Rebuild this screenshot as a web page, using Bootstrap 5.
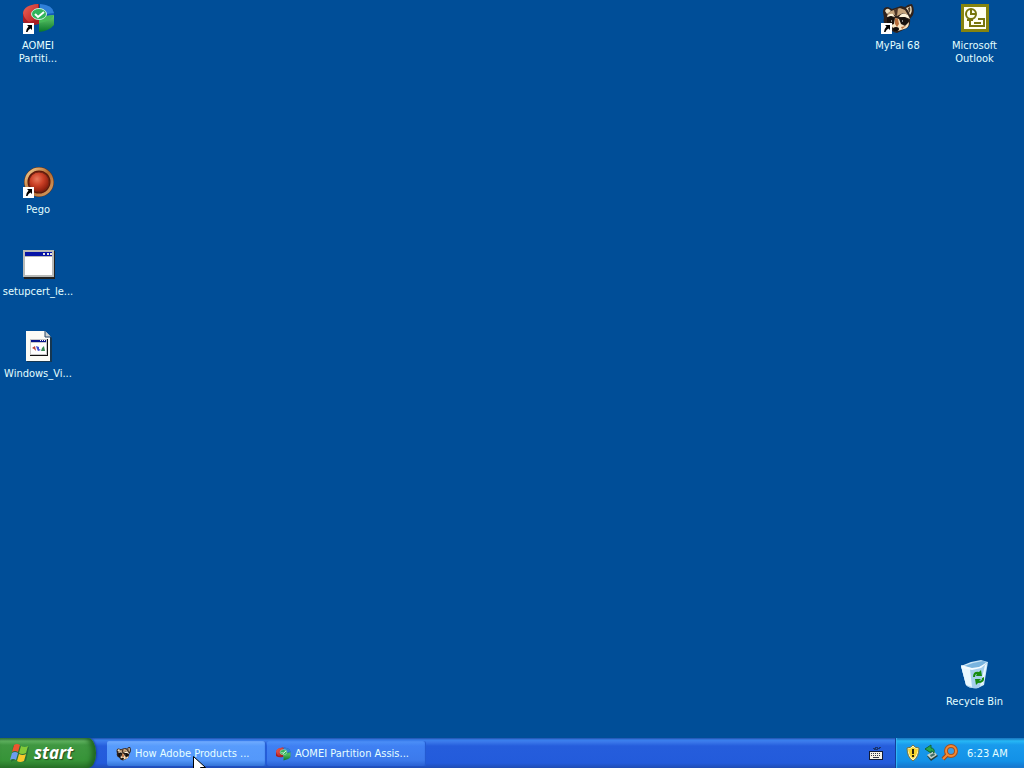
<!DOCTYPE html>
<html lang="en">
<head>
<meta charset="utf-8">
<meta name="viewport" content="width=device-width, initial-scale=1">
<title>Desktop</title>
<link href="https://cdn.jsdelivr.net/npm/bootstrap@5.3.0/dist/css/bootstrap.min.css" rel="stylesheet">
<script src="https://cdn.jsdelivr.net/npm/bootstrap@5.3.0/dist/js/bootstrap.bundle.min.js" defer></script>
<style>
  body { background: #004e98; color: #fff; font-family: Tahoma, "DejaVu Sans Condensed", "DejaVu Sans", sans-serif; font-size: 11px; line-height: 13px; }
  .desktop { display: grid; grid-template-columns: 76px 1fr 77px 77px; grid-template-rows: repeat(9, 82px); padding-right: 11px; min-height: 0; }
  .shortcut { padding-top: 2px; color: #e4ffff; text-decoration: none; text-align: center; white-space: nowrap; }
  .shortcut svg { display: block; margin: 0 auto 5px; overflow: visible; }
  .c1 { grid-column: 1; } .c3 { grid-column: 3; } .c4 { grid-column: 4; }
  .r1 { grid-row: 1; } .r3 { grid-row: 3; } .r4 { grid-row: 4; } .r5 { grid-row: 5; } .r9 { grid-row: 9; }
  .taskbar { height: 30px; background: linear-gradient(#1f50aa 0, #3a80ee 2px, #3a78ea 4px, #255ddc 8px, #235bdb 25px, #1f4cb4 30px); }
  .start { width: 96px; border: 0; padding: 0 0 0 9px; color: #fff; gap: 5px; border-radius: 0 8px 8px 0 / 0 15px 15px 0;
    background: linear-gradient(#3c7d4b 0, #62b562 3px, #3f9741 7px, #379438 22px, #2c7a2c 29px); box-shadow: inset -4px 0 5px #206620, 1px 0 2px #173f9c;
    font: italic bold 17px/20px "Open Sans", "Noto Sans", sans-serif; text-shadow: 1px 1px 1px #254a20; }
  .windows { gap: 1px; padding-left: 11px; }
  .task { width: 159px; height: 25px; margin-top: 3px; border: 0; border-radius: 2px; padding: 0 0 0 9px; gap: 4px; color: #e6ffff; font: inherit; text-align: left; white-space: nowrap;
    background: linear-gradient(#4d91f8 0, #3f80f3 5px, #3c7aec 19px, #2d65d7 24px); box-shadow: inset -1px 0 1px #2258cf; }
  .task.hovered { background: linear-gradient(#71adff 0, #579bfc 5px, #5498fa 19px, #397add 24px); }
  .pointer { left: 86px; top: 15px; z-index: 2; pointer-events: none; }
  .tray { width: 129px; padding-left: 9px; gap: 2px; border-left: 1px solid #123f9b; color: #e4ffff;
    background: linear-gradient(#166cb8 0, #27b8f5 3px, #199aec 7px, #1391e7 23px, #1673cb 30px); box-shadow: inset 1px 0 1px #35baf5; }
  .langbar { border: 0; background: none; padding: 0; margin-right: 12px; }
  .tray-button { border: 0; background: none; padding: 0; }
  .clock { margin-left: 7px; }
</style>
</head>
<body class="vh-100 overflow-hidden d-flex flex-column">
<svg width="0" height="0" class="position-absolute" aria-hidden="true">
  <defs>
    <linearGradient id="red" x2="1" y2="1"><stop stop-color="#ef6557"/><stop offset="1" stop-color="#b61d22"/></linearGradient>
    <linearGradient id="green" x2="0" y2="1"><stop stop-color="#69ce71"/><stop offset="1" stop-color="#087629"/></linearGradient>
    <radialGradient id="ball" cx=".4" cy=".35" r=".65"><stop stop-color="#e8795c"/><stop offset=".5" stop-color="#cb4026"/><stop offset="1" stop-color="#8b1c0c"/></radialGradient>
    <linearGradient id="gold" x2="1" y2="1"><stop stop-color="#f8d496"/><stop offset=".5" stop-color="#b2682e"/><stop offset="1" stop-color="#d6a066"/></linearGradient>
    <linearGradient id="glass" x2="1" y2="1"><stop stop-color="#e2f4fd"/><stop offset=".5" stop-color="#b3d7f1"/><stop offset="1" stop-color="#e6fbff"/></linearGradient>
    <symbol id="arrow" viewBox="0 0 11 11"><path fill="#fff" d="M0 0h11v11H0z"/><path fill="#000" d="M4 2h5v5L7.500 5.500Q5 6.500 4.500 9H3Q3 6 5.500 3.500z"/></symbol>
    <symbol id="disk" viewBox="0 0 32 32">
      <path fill="#a71e25" d="M0 11Q2 3 16 2v20Q6 25 0 20z"/><path fill="url(#red)" d="M0 11Q1 3 15 2v15L6 20Q1 17 0 11z"/>
      <path fill="#1559b8" d="M17 2Q30 3 31 11v6L17 14z"/><path fill="#2f80d8" d="M17 2Q30 3 31 11l-14 2z"/>
      <path fill="url(#green)" d="M16 15l15-2v10q-5 6-15 7z"/><path fill="#46b958" d="M16 15l15-2q-2 6-15 8z"/>
      <ellipse cx="16" cy="12" rx="7.500" ry="5.500" fill="#31b45b" stroke="#c9eddd"/><path d="M12 12l3 3 6-5" fill="none" stroke="#fff" stroke-width="2"/>
    </symbol>
    <symbol id="raccoon" viewBox="0 0 32 32">
      <path fill="#30221c" d="M1 9Q1 4 6 4l4 2 9-3 4 1q3-3 7-3 3 5 1 11l-3 4q1 8-5 10l-8 4q-6-1-8-6-7-3-5-9z"/>
      <path fill="#efe0c2" d="M3 8q1-3 4-2l2 2-4 3zM24 5l5-2q2 5-1 9-1-4-4-7z"/>
      <path fill="#54402f" d="M26 5l2-1q1 4-1 6z"/>
      <path fill="#c4a27b" d="M9 8l9-3 5 2 3 5-5-2-6 3-5-2-5 3q0-4 4-6z"/>
      <path fill="#4c3427" d="M12 7l4-2-1 8-2-1z"/>
      <path fill="#fff3da" d="M5 14q2-4 6-3l2 3-4-1zM17 14q3-6 9-2l2 4-5-2z"/>
      <path fill="#16100e" d="M5 15l4-2 4 3-1 6q-5 2-7-2zM17 15l5-1 5 3-2 5-6-1z"/>
      <path fill="#f6e2c2" d="M13 15l4 1 2 5 4 2 4-4q0 6-5 7l-6 2-5-3-2-3 3-1z"/>
      <path fill="#b66c3b" d="M13 15l3 1 1 5-2 3-2-3zM19 24l5-1-4 3z"/>
      <ellipse cx="14" cy="26" rx="3" ry="2" fill="#100c0c"/>
      <path stroke="#fff" d="M9 18h1m10 0h1"/>
    </symbol>
  </defs>
</svg>

<main class="desktop flex-grow-1">
  <a class="shortcut c1 r1" href="#aomei"><svg width="32" height="32"><use href="#disk" x="1" width="32" height="32"/><use href="#arrow" x="1" y="21" width="11" height="11"/></svg>AOMEI<br>Partiti...</a>
  <a class="shortcut c1 r3" href="#pego"><svg width="32" height="32"><circle cx="17" cy="16" r="15" fill="#6b3415"/><circle cx="17" cy="16" r="13" fill="#5c170b" stroke="url(#gold)" stroke-width="3"/><circle cx="17" cy="16" r="10" fill="url(#ball)" stroke="#782713"/><use href="#arrow" x="1" y="21" width="11" height="11"/></svg>Pego</a>
  <a class="shortcut c1 r4" href="#setup"><svg width="32" height="32" shape-rendering="crispEdges"><path fill="#222" d="M2 3h31v28H2z"/><path fill="#b8bab8" d="M1 2h31v27H1z"/><path fill="#fff" d="M3 9h27v18H3z"/><path fill="#0714a6" d="M3 4h27v4H3z"/><path fill="#e6e6df" d="M21 5h2v2h-2zm4 0h2v2h-2zm3 0h2v2h-2z"/></svg>setupcert_le...</a>
  <a class="shortcut c1 r5" href="#windows"><svg width="32" height="32"><path fill="#163751" d="M5 2h19l6 6v24H5z"/><path fill="#fbfbf6" d="M4 1h19l5 5v25H4z"/><path fill="#cbd0cf" d="M23 1v6h6z"/><path d="M23 1v6h6" fill="none" stroke="#244567"/><g shape-rendering="crispEdges"><path fill="#111" d="M8 9h18v17H8z"/><path fill="#c9c9c9" d="M8 9h17v16H8z"/><path fill="#fff" d="M9 13h15v11H9z"/><path fill="#06148b" d="M9 10h15v2H9z"/><path fill="#fff" d="M18 10h1v1h-1zm2 0h1v1h-1zm2 0h1v1h-1z"/></g><path d="M10 18l3-2 1 5-2-2z" fill="#b93d35"/><path d="M14 16l3 1v2l2 1-3 1-1-2z" fill="#3c4bd2"/><path d="M20 18l2-2 1 5h-4z" fill="#398d57"/></svg>Windows_Vi...</a>
  <a class="shortcut c3 r1" href="#mypal"><svg width="32" height="32"><use href="#raccoon" y="1" width="32" height="32"/><use href="#arrow" x="-1" y="21" width="11" height="11"/></svg>MyPal 68</a>
  <a class="shortcut c4 r1" href="#outlook"><svg width="32" height="32"><path fill="#86840f" d="M2 2h28v28H2z"/><path fill="#fffff1" d="M5 5h22v22H5z"/><g fill="none" stroke="#77750c" stroke-width="2"><circle cx="12" cy="12" r="5"/><path d="M12 8v4h4M19 17h6v7H11v-5M8 18h6M15 21h7"/></g></svg>Microsoft<br>Outlook</a>
  <a class="shortcut c4 r9" href="#recycle"><svg width="32" height="32"><path fill="url(#glass)" d="M2 8l10-4 10-2 7 2-4 23-6 3q-8 1-12-3z"/><path fill="#79b4df" d="M5 8l9-3 10-2 3 1-4 4-8 3z"/><path fill="#a6cfed" d="M2 8l11 3 7-1 8-5-4 21-5 4q-8 1-12-3z"/><path fill="#e9f8ff" d="M2 8l9 3 2 18-6-2zM26 7l2-1-4 20-3 2z"/><path fill="#f5fcff" d="M2 7l11 3 7-1 9-5-7 6-9 2-10-2z"/><path fill="#178b10" d="M14 19q0-6 6-5l2-2 1 6h-6l1-2q-2 0-2 3zM25 19q1 6-6 6l-2 2-1-6h6l-2 2q3 0 3-3z"/></svg>Recycle Bin</a>
</main>

<footer class="taskbar d-flex flex-shrink-0 align-items-stretch">
  <button class="start d-flex align-items-center" type="button"><svg width="20" height="20" aria-hidden="true"><path fill="#123a2f" opacity=".4" d="M4 3q3-2 7 0 5 2 9 1l-3 14q-5 2-8 0-4-2-7 1z"/><path fill="#ed562f" d="M5 2q3-2 6 0L9 9q-3-2-6 0z"/><path fill="#83ca39" d="M12 3q4 2 7 0l-2 7q-4 2-7 0z"/><path fill="#6c9df0" d="M3 10q3-2 6 0l-2 7q-3-2-6 0z"/><path fill="#f7c82c" d="M10 11q4 2 7 0l-2 7q-4 2-7 0z"/></svg>start</button>
  <nav class="windows d-flex flex-grow-1" aria-label="Open windows">
    <button class="task hovered position-relative d-flex align-items-center" type="button"><svg width="15" height="16" aria-hidden="true"><use href="#raccoon" width="15" height="16"/></svg>How Adobe Products ...
      <svg class="pointer position-absolute" width="13" height="20" aria-hidden="true"><path fill="#fff" stroke="#000" d="M.5.500v16l4-4 3 7 3-1-3-7h5z"/></svg></button>
    <button class="task d-flex align-items-center" type="button"><svg width="15" height="16" aria-hidden="true"><use href="#disk" width="15" height="16"/></svg>AOMEI Partition Assis...</button>
  </nav>
  <button class="langbar" type="button" aria-label="Keyboard"><svg width="14" height="16" shape-rendering="crispEdges"><path d="M4 3h2V2h2v1h2V2h2M5 4h4" fill="none" stroke="#18356f"/><path fill="#101b38" d="M0 6h14v9H0z"/><path fill="#f5f2e8" d="M1 7h12v7H1z"/><path stroke="#343846" stroke-dasharray="1 1" d="M2 8.500h10M2 10.500h10"/><path stroke="#343846" d="M4 12.500h6"/></svg></button>
  <aside class="tray d-flex align-items-center">
    <button class="tray-button" type="button" aria-label="Security"><svg class="d-block" width="16" height="18"><path fill="#fff6bd" stroke="#76723c" d="M2 4q4 0 6-3 2 3 6 3 0 9-6 13-6-4-6-13z"/><path fill="#f6d52c" d="M8 3q2 2 5 2-1 7-5 10-4-3-5-10 3 0 5-2z"/><path d="M8 5v5m0 1v2" stroke="#28240e" stroke-width="2"/></svg></button>
    <button class="tray-button" type="button" aria-label="Remove hardware"><svg class="d-block" width="16" height="18"><path fill="#253f3b" d="M4 12l7-4 4 4-7 5z"/><path fill="#c3d3cb" d="M4 11l7-4 3 4-6 4z"/><path fill="#406e67" d="M7 11l4-2 1 2-4 2z"/><path fill="#29a84a" stroke="#126438" d="M2 5l6-4v3q4 0 3 5-1-2-3-2v2z"/></svg></button>
    <button class="tray-button" type="button" aria-label="Search"><svg class="d-block" width="17" height="18"><path d="M7 10l-5 5" stroke="#9b461a" stroke-width="4"/><circle cx="10" cy="7" r="5" fill="#3a9ee6" stroke="#a5501f" stroke-width="4"/><path d="M7 10l-5 5" stroke="#f58a32" stroke-width="2"/><circle cx="10" cy="7" r="5" fill="none" stroke="#f58a32" stroke-width="2"/></svg></button>
    <time class="clock text-nowrap">6:23 AM</time>
  </aside>
</footer>
</body>
</html>
